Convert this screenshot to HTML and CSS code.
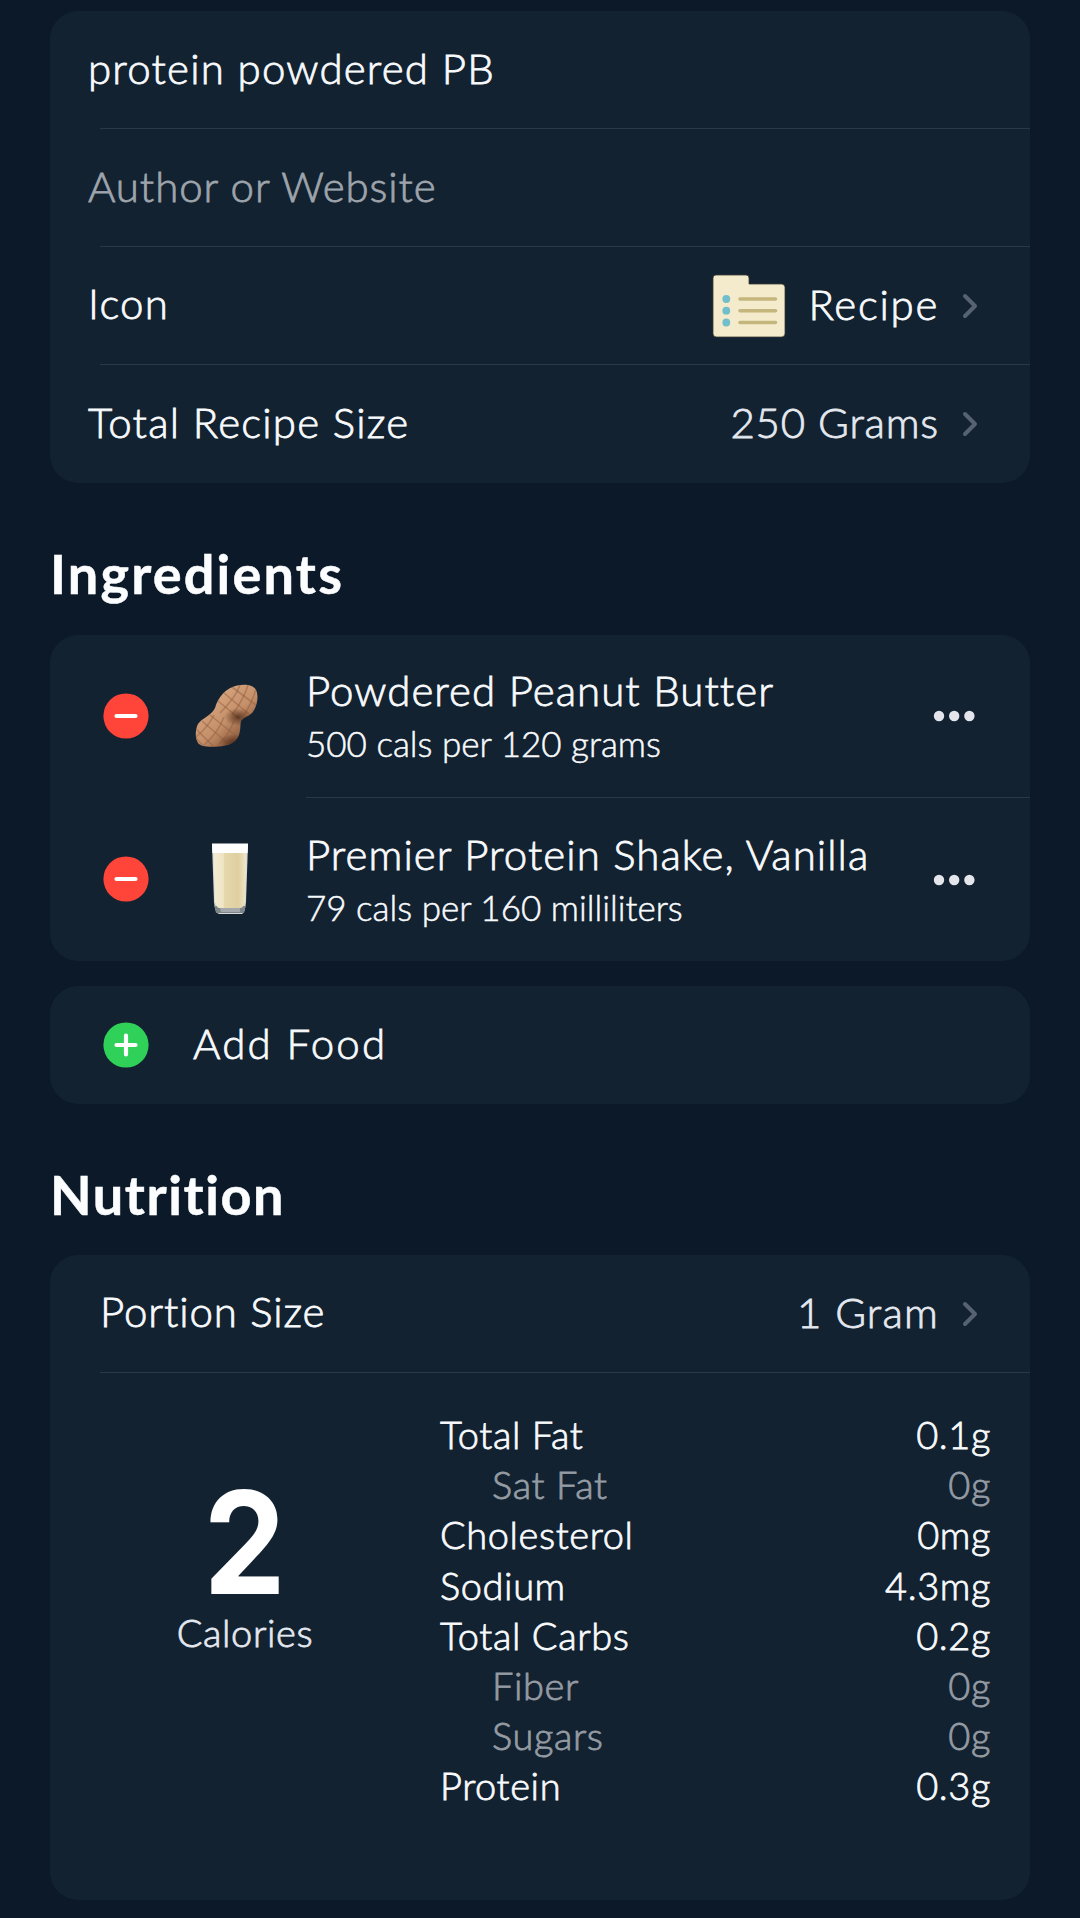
FILE: index.html
```html
<!DOCTYPE html>
<html lang="en">

<head>
    <meta charset="UTF-8">
    <meta name="viewport" content="width=device-width, initial-scale=1.0">
    <title>Edit Recipe</title>
    <link rel="stylesheet" href="styles.css">
</head>

<body>
    <!-- Recipe details -->
    <div class="card">
        <div class="row">
            <span class="label">protein powdered PB</span>
        </div>
        <div class="row">
            <span class="label placeholder">Author or Website</span>
        </div>
        <div class="row">
            <span class="label icon-label">Icon</span>
            <svg class="folder" width="74" height="66" viewBox="0 0 74 66">
                <path d="M4 2H34Q37 2 37 5V11H69.500Q73 11 73 14.500V60.500Q73 64 69.500 64H4.500Q1 64 1 60.500V5Q1 2 4 2Z" fill="#f3ebcb" stroke="#3a3a32" stroke-width="0.800" />
                <g fill="#71bfcc">
                    <circle cx="14.300" cy="26" r="3.900" />
                    <circle cx="14.300" cy="37.700" r="3.900" />
                    <circle cx="14.300" cy="49.500" r="3.900" />
                </g>
                <path d="M28 26H63.500M28 37.700H63.500M28 49.500H63.500" stroke="#c5b67d" stroke-width="3.600" stroke-linecap="round" />
            </svg>
            <span class="value wide">Recipe</span>
            <svg class="chevron" width="18" height="28" viewBox="0 0 18 28">
                <path d="M4 4L14 14L4 24" />
            </svg>
        </div>
        <div class="row">
            <span class="label">Total Recipe Size</span>
            <span class="value dim tight">250 Grams</span>
            <svg class="chevron" width="18" height="28" viewBox="0 0 18 28">
                <path d="M4 4L14 14L4 24" />
            </svg>
        </div>
    </div>

    <h2 class="ingredients-title">Ingredients</h2>
    <div class="card">
        <div class="food">
            <svg class="round-btn" width="46" height="46" viewBox="0 0 46 46">
                <circle cx="23" cy="23" r="22.600" fill="#ff453a" />
                <path d="M13.500 23H32.500" />
            </svg>
            <div class="food-icon">
                <svg width="66" height="66" viewBox="0 0 66 66">
                    <defs>
                        <linearGradient id="shell" x1="0.200" y1="0.100" x2="0.850" y2="0.850">
                            <stop offset="0" stop-color="#dcab84" />
                            <stop offset="0.550" stop-color="#c4906b" />
                            <stop offset="1" stop-color="#7c4a2e" />
                        </linearGradient>
                        <radialGradient id="shade" cx="0.500" cy="0.500" r="0.500">
                            <stop offset="0" stop-color="#4d2814" stop-opacity="0.800" />
                            <stop offset="1" stop-color="#4d2814" stop-opacity="0" />
                        </radialGradient>
                        <clipPath id="nut">
                            <path d="M43 2.500C51 1 60 1.500 62.500 8C65 15 62.500 25 58 30C54 34 49 34 47 38C46 42 47 46 45 52C42 60 34 63 24 63.500C15 64 7 64 4 60C1 55 1 47 4 41C8 35 17 33 21 25C24 14 32 5 43 2.500Z" />
                        </clipPath>
                    </defs>
                    <g clip-path="url(#nut)">
                        <rect width="66" height="66" fill="url(#shell)" />
                        <path d="M24 18L46 36M30 10L56 32M38 4L62 22M8 38L38 64M16 32L46 56M2 46L22 66M1 54L10 64" fill="none" stroke="#93603f" stroke-width="1.600" opacity="0.500" />
                        <path d="M46 2Q42 14 26 30M54 2Q50 16 38 32M62 6Q58 20 50 32M20 32Q14 44 2 54M30 34Q24 50 10 62M40 38Q34 54 20 66" fill="none" stroke="#93603f" stroke-width="1.600" opacity="0.500" />
                        <ellipse cx="44" cy="34" rx="14" ry="9" fill="url(#shade)" />
                        <ellipse cx="40" cy="60" rx="16" ry="9" fill="url(#shade)" />
                    </g>
                </svg>
            </div>
            <div class="food-body">
                <div class="food-text">
                    <div class="food-name">Powdered Peanut Butter</div>
                    <div class="food-info">500 cals per 120 grams</div>
                </div>
                <svg class="dots" width="44" height="12" viewBox="0 0 44 12">
                    <circle cx="6" cy="6" r="5.200" />
                    <circle cx="21.200" cy="6" r="5.200" />
                    <circle cx="36.400" cy="6" r="5.200" />
                </svg>
            </div>
        </div>
        <div class="food">
            <svg class="round-btn" width="46" height="46" viewBox="0 0 46 46">
                <circle cx="23" cy="23" r="22.600" fill="#ff453a" />
                <path d="M13.500 23H32.500" />
            </svg>
            <div class="food-icon">
                <svg width="40" height="74" viewBox="0 0 40 74">
                    <defs>
                        <linearGradient id="milk">
                            <stop offset="0" stop-color="#f3ecd3" />
                            <stop offset="0.300" stop-color="#efe5c4" />
                            <stop offset="0.320" stop-color="#e6d8ae" />
                            <stop offset="0.750" stop-color="#dfcfa0" />
                            <stop offset="1" stop-color="#f0e8cc" />
                        </linearGradient>
                    </defs>
                    <path d="M2 2H38L36 60Q35 71 32 72H9Q5 71 4 60Z" fill="#d9dad6" />
                    <path d="M4.500 64L6 71H34L35.500 64Z" fill="#7d858b" />
                    <path d="M10 66H30V70H11Z" fill="#a3a8aa" />
                    <path d="M3.500 9H36.500L35 58Q34 65 31 66H9Q6 65 5 58Z" fill="url(#milk)" />
                    <path d="M2 1.500H38L37.600 11H2.400Z" fill="#fff" />
                </svg>
            </div>
            <div class="food-body">
                <div class="food-text">
                    <div class="food-name">Premier Protein Shake, Vanilla</div>
                    <div class="food-info">79 cals per 160 milliliters</div>
                </div>
                <svg class="dots" width="44" height="12" viewBox="0 0 44 12">
                    <circle cx="6" cy="6" r="5.200" />
                    <circle cx="21.200" cy="6" r="5.200" />
                    <circle cx="36.400" cy="6" r="5.200" />
                </svg>
            </div>
        </div>
    </div>

    <div class="card add-food">
        <svg class="round-btn" width="46" height="46" viewBox="0 0 46 46">
            <circle cx="23" cy="23" r="22.600" fill="#30d158" />
            <path d="M13.500 23H32.500M23 13.500V32.500" />
        </svg>
        <span class="add-label">Add Food</span>
    </div>

    <h2 class="nutrition-title">Nutrition</h2>
    <div class="card nutrition">
        <div class="row">
            <span class="portion">Portion Size</span>
            <span class="value dim">1 Gram</span>
            <svg class="chevron" width="18" height="28" viewBox="0 0 18 28">
                <path d="M4 4L14 14L4 24" />
            </svg>
        </div>
        <div class="facts">
            <div class="calories">
                <div class="calories-number">2</div>
                <div class="calories-label">Calories</div>
            </div>
            <div class="table">
                <div class="fact"><span>Total Fat</span><span>0.1g</span></div>
                <div class="fact sub"><span>Sat Fat</span><span>0g</span></div>
                <div class="fact"><span>Cholesterol</span><span>0mg</span></div>
                <div class="fact"><span>Sodium</span><span>4.3mg</span></div>
                <div class="fact"><span>Total Carbs</span><span>0.2g</span></div>
                <div class="fact sub"><span>Fiber</span><span>0g</span></div>
                <div class="fact sub"><span>Sugars</span><span>0g</span></div>
                <div class="fact"><span>Protein</span><span>0.3g</span></div>
            </div>
        </div>
    </div>
</body>

</html>
```

FILE: styles.css
```css
* {
    box-sizing: border-box;
}

body {
    margin: 0;
    padding: 11px 50px 0;
    background-color: #0c1928;
    color: #f8fafc;
    font-family: "Avenir Next", Avenir, Lato, sans-serif;
    font-weight: 300;
    font-size: 42px;
    letter-spacing: 1.2px;
    -webkit-text-stroke: 0.8px currentColor;
}

svg {
    display: block;
    flex-shrink: 0;
}

.card {
    background-color: #122231;
    border-radius: 28px;
    overflow: hidden;
}

/* Settings rows */
.row {
    display: flex;
    align-items: center;
    height: 118px;
    margin-left: 50px;
    padding-right: 51px;
    border-bottom: 1px solid #2b3947;
}

.row:last-child {
    border-bottom: none;
}

.label {
    margin-left: -12px;
    margin-right: auto;
    padding-bottom: 4px;
}

.icon-label {
    padding-bottom: 6px;
    letter-spacing: 1.2px;
}

.portion {
    margin-right: auto;
    padding-bottom: 6px;
    letter-spacing: 0.9px;
}

.placeholder {
    color: #9ea4ab;
    letter-spacing: 0.9px;
}

.wide {
    letter-spacing: 1.7px;
}

.tight {
    letter-spacing: 0.8px;
}

.value {
    margin-right: 22px;
    padding-bottom: 4px;
}

.dim {
    color: #e4e8ef;
}

.folder {
    margin-right: 23px;
}

.chevron path {
    fill: none;
    stroke: #566270;
    stroke-width: 4;
    stroke-linecap: round;
    stroke-linejoin: round;
}

/* Headings */
h2 {
    margin: 59px 0 29px;
    font-size: 54px;
    font-weight: 700;
    line-height: 64px;
    color: #fcfdff;
    -webkit-text-stroke: 0.5px currentColor;
}

.ingredients-title {
    letter-spacing: 2.2px;
}

.nutrition-title {
    margin: 59px 0 28px;
    letter-spacing: 1.6px;
}

/* Ingredients */
.food {
    display: flex;
    align-items: center;
    height: 163px;
    padding-left: 53px;
}

.round-btn {
    margin-bottom: 1px;
}

.round-btn path {
    fill: none;
    stroke: #fff;
    stroke-width: 4.2;
    stroke-linecap: round;
}

.food-icon {
    display: flex;
    justify-content: center;
    width: 66px;
    margin: 0 46px 2px 45px;
}

.food + .food .food-icon svg {
    margin-left: 5px;
}

.food-body {
    display: flex;
    flex: 1;
    align-items: center;
    justify-content: space-between;
    height: 100%;
    padding-right: 53px;
    border-bottom: 1px solid #2b3947;
}

.food:last-child .food-body {
    border-bottom: none;
}

.food-text {
    padding-bottom: 3px;
    white-space: nowrap;
}

.food-name {
    line-height: 52px;
    letter-spacing: 1.05px;
}

.food-info {
    margin-top: 6px;
    font-size: 35px;
    line-height: 43px;
    letter-spacing: 0;
    -webkit-text-stroke-width: 0.5px;
}

.dots {
    fill: #e4e6ec;
}

/* Add food */
.add-food {
    display: flex;
    align-items: center;
    height: 118px;
    margin-top: 25px;
    padding-left: 53px;
}

.add-label {
    margin-left: 44px;
    padding-bottom: 5px;
    letter-spacing: 2.2px;
}

/* Nutrition */
.nutrition {
    height: 645px;
}

.facts {
    display: flex;
    font-size: 38px;
    letter-spacing: 0.6px;
}

.calories {
    width: 390px;
    padding-top: 105px;
    text-align: center;
}

.calories-number {
    font-family: Inter, sans-serif;
    font-size: 142px;
    font-weight: 700;
    line-height: 129px;
    color: #fff;
    transform: scaleX(0.92);
    -webkit-text-stroke: 0;
}

.calories-label {
    line-height: 50px;
    color: #e4e8ef;
}

.table {
    width: 551px;
    padding-top: 36px;
}

.fact {
    display: flex;
    justify-content: space-between;
    line-height: 50.2px;
}

.fact.sub {
    padding-left: 52px;
    color: #949ba3;
}
```
